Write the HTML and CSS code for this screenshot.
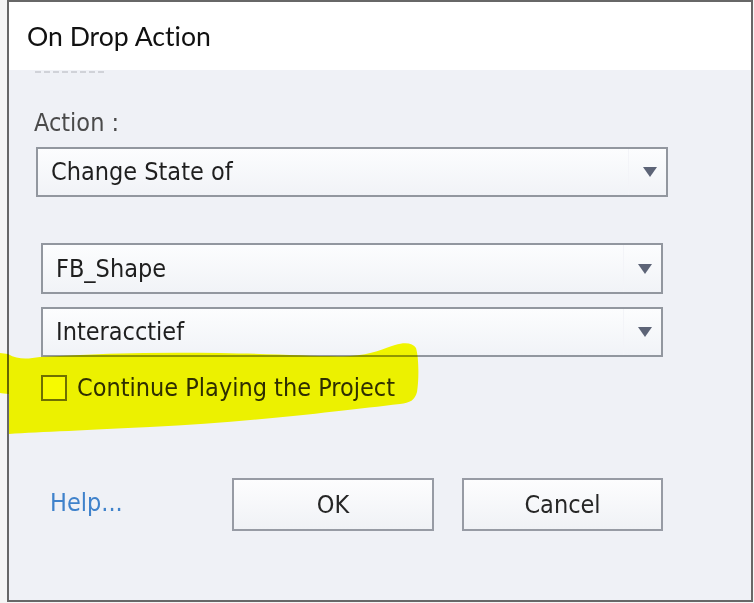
FILE: index.html
```html
<!DOCTYPE html>
<html>
<head>
<meta charset="utf-8">
<title>On Drop Action</title>
<link rel="stylesheet" href="styles.css">
</head>
<body>
<div class="window">
  <div class="titlebar"><span class="title">On Drop Action</span></div>
  <div class="content">
    <div class="ghost"><span class="ghost-dots"></span></div>
    <div class="label">Action :</div>
    <div class="select select-wide">
      <span class="select-text">Change State of</span>
      <span class="select-btn"><span class="arrow"></span></span>
    </div>
    <div class="select select-narrow first">
      <span class="select-text">FB_Shape</span>
      <span class="select-btn"><span class="arrow"></span></span>
    </div>
    <div class="select select-narrow second">
      <span class="select-text">Interacctief</span>
      <span class="select-btn"><span class="arrow"></span></span>
    </div>
    <div class="check">
      <span class="box"></span>
      <span class="check-text">Continue Playing the Project</span>
    </div>
    <div class="footer">
      <a class="help">Help...</a>
      <button class="btn">OK</button>
      <button class="btn">Cancel</button>
    </div>
  </div>
</div>
<svg class="highlight" width="440" height="110" viewBox="0 0 440 110">
  <path d="M0,13 L8,14 C 18,20 28,19 40,17 C 100,13 160,12 220,13 C 280,14 320,17 350,16 C 372,15 385,8 395,5 C 405,2 413,3 416,8 C 419,18 419,40 417,52 C 415,60 410,63 400,64 C 340,71 250,82 150,87 C 90,90 40,92 9,94 L 9,54 C 5,54 2,53 0,53 Z" fill="#fcff00"/>
</svg>
</body>
</html>
```
FILE: styles.css
```css
html, body {
  margin: 0;
  padding: 0;
}
body {
  background: #f5f5f5;
  width: 754px;
  height: 603px;
  overflow: hidden;
  font-family: "DejaVu Sans Condensed", "DejaVu Sans", sans-serif;
}
.window {
  margin-left: 7px;
  width: 746px;
  height: 602px;
  box-sizing: border-box;
  border: 2px solid #676767;
  background: #eff1f6;
  display: flex;
  flex-direction: column;
}
.titlebar {
  height: 68px;
  background: #ffffff;
  padding-left: 18px;
  display: flex;
  align-items: center;
}
.title {
  font-family: Lato, "Open Sans", sans-serif;
  font-size: 26.6px;
  line-height: 68px;
  font-variant-ligatures: none;
  font-feature-settings: "liga" 0, "dlig" 0;
  color: #111111;
}
.content {
  flex: 1;
  display: flex;
  flex-direction: column;
}
.ghost {
  height: 3px;
  padding-left: 26px;
}
.ghost-dots {
  display: block;
  width: 70px;
  height: 2px;
  margin-top: 1px;
  background: repeating-linear-gradient(90deg, #d0d2d8 0 6px, transparent 6px 9px);
}
.label {
  margin-top: 37px;
  margin-left: 25px;
  font-size: 25px;
  line-height: 26px;
  color: #4a4a4a;
}
.select {
  box-sizing: border-box;
  border: 2px solid #92979f;
  background: linear-gradient(#fcfdfe, #f1f3f7);
  display: flex;
  align-items: center;
}
.select-wide {
  margin-top: 11px;
  margin-left: 27px;
  width: 632px;
  height: 50px;
}
.select-narrow {
  margin-left: 32px;
  width: 622px;
  height: 51px;
}
.select-narrow.first {
  margin-top: 46px;
}
.select-narrow.second {
  margin-top: 13px;
  height: 50px;
}
.select-text {
  flex: 1;
  padding-left: 13px;
  font-size: 25px;
  line-height: 26px;
  color: #1f1f1f;
}
.select-btn {
  width: 38px;
  align-self: stretch;
  border-left: 1px solid #f3f4f8;
  display: flex;
  align-items: center;
  justify-content: flex-start;
  padding-left: 14px;
  box-sizing: border-box;
}
.arrow {
  width: 0;
  height: 0;
  border-left: 7px solid transparent;
  border-right: 7px solid transparent;
  border-top: 10px solid #5d6477;
}
.check {
  margin-top: 18px;
  margin-left: 32px;
  display: flex;
  align-items: center;
}
.box {
  width: 26px;
  height: 26px;
  box-sizing: border-box;
  border: 2px solid #707070;
  background: #fafafa;
}
.check-text {
  margin-left: 10px;
  font-size: 25px;
  line-height: 26px;
  color: #2e2e2e;
}
.footer {
  margin-top: 77px;
  margin-left: 41px;
  display: grid;
  grid-template-columns: 154px 202px 201px;
  column-gap: 28px;
  align-items: center;
}
.help {
  font-size: 25px;
  line-height: 26px;
  color: #3f82cb;
  margin-top: -4px;
}
.btn {
  height: 53px;
  box-sizing: border-box;
  border: 2px solid #979ba4;
  background: linear-gradient(#fdfdfe, #f0f2f6);
  font-family: "DejaVu Sans Condensed", "DejaVu Sans", sans-serif;
  font-size: 25px;
  color: #262626;
  padding: 0;
  margin: 0;
}
.highlight {
  position: absolute;
  left: 0;
  top: 340px;
  mix-blend-mode: multiply;
  pointer-events: none;
}
```
